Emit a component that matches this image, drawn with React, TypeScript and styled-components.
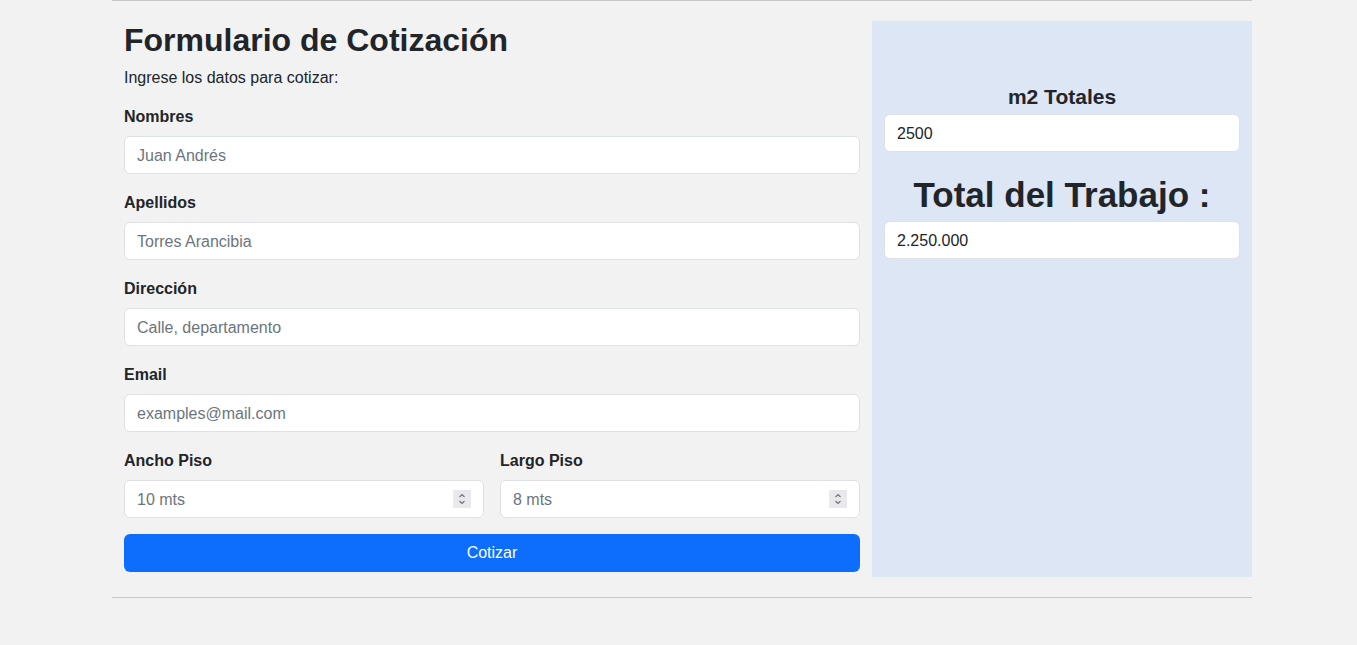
import React from "react";
import styled, { createGlobalStyle } from "styled-components";

const Global = createGlobalStyle`
  html, body { margin: 0; padding: 0; background: #f2f2f2; }
  body {
    font-family: "Liberation Sans", Arial, sans-serif;
    font-size: 16px;
    line-height: 1.5;
    color: #212529;
  }
  * { box-sizing: border-box; }
`;

const Container = styled.div`
  width: 1140px;
  margin: 0 0 0 112px;
`;

const Rule = styled.hr<{ $top?: number }>`
  margin: ${(p) => p.$top ?? 0}px 0 0;
  border: 0;
  border-top: 1px solid #c8c8c8;
  height: 0;
`;

const Row = styled.div`
  display: grid;
  grid-template-columns: 760px 380px;
  margin-top: 20px;
`;

const FormCol = styled.form`
  padding: 0 12px 5px;
`;

const Title = styled.h2`
  margin: 0 0 6px;
  font-size: 32px;
  line-height: 38px;
  font-weight: 700;
`;

const Intro = styled.p`
  margin: 0 0 15px;
  padding-top: 1px;
  line-height: 23px;
`;

const Group = styled.div`
  display: flex;
  flex-direction: column;
  margin-bottom: 16px;
`;

const Pair = styled.div`
  display: grid;
  grid-template-columns: 1fr 1fr;
  gap: 16px;
`;

const Label = styled.label`
  font-weight: 700;
  line-height: 24px;
  padding-top: 1px;
  margin-bottom: 7px;
`;

const FieldWrap = styled.div`
  position: relative;
`;

const Input = styled.input`
  display: block;
  width: 100%;
  height: 38px;
  padding: 7px 12px 5px;
  font: inherit;
  font-size: 16px;
  color: #212529;
  background: #fff;
  border: 1px solid #dee2e6;
  border-radius: 6px;
  outline: none;
  &::placeholder { color: #6c757d; }
`;

const Spinner = styled.span`
  position: absolute;
  right: 13px;
  top: 10px;
  width: 18px;
  height: 18px;
  background: #e9e9ed;
  display: flex;
  align-items: center;
  justify-content: center;
`;

const Button = styled.button`
  display: block;
  width: 100%;
  height: 38px;
  border: 0;
  border-radius: 6px;
  background: #0d6efd;
  color: #fff;
  font: inherit;
  font-size: 16px;
  padding-top: 1px;
`;

const Panel = styled.aside`
  background: #dde6f4;
  padding: 63px 12px 0;
  display: flex;
  flex-direction: column;
`;

const PanelLabel = styled.div<{ $size: number; $lh: number; $mt: number; $mb: number }>`
  text-align: center;
  font-weight: 700;
  font-size: ${(p) => p.$size}px;
  line-height: ${(p) => p.$lh}px;
  margin: ${(p) => p.$mt}px 0 ${(p) => p.$mb}px;
`;

const Spin = () => (
  <Spinner>
    <svg width="10" height="14" viewBox="0 0 10 14" fill="none" stroke="#707070" strokeWidth="1.1">
      <path d="M2.5 5 L5 2.5 L7.5 5" />
      <path d="M2.5 9 L5 11.5 L7.5 9" />
    </svg>
  </Spinner>
);

const fields = [
  { label: "Nombres", ph: "Juan Andrés" },
  { label: "Apellidos", ph: "Torres Arancibia" },
  { label: "Dirección", ph: "Calle, departamento" },
  { label: "Email", ph: "examples@mail.com" },
];

export default function App() {
  return (
    <>
      <Global />
      <Container>
        <Rule />
        <Row>
          <FormCol onSubmit={(e) => e.preventDefault()}>
            <Title>Formulario de Cotización</Title>
            <Intro>Ingrese los datos para cotizar:</Intro>
            {fields.map((f) => (
              <Group key={f.label}>
                <Label>{f.label}</Label>
                <Input placeholder={f.ph} />
              </Group>
            ))}
            <Pair>
              <Group>
                <Label>Ancho Piso</Label>
                <FieldWrap>
                  <Input placeholder="10 mts" />
                  <Spin />
                </FieldWrap>
              </Group>
              <Group>
                <Label>Largo Piso</Label>
                <FieldWrap>
                  <Input placeholder="8 mts" />
                  <Spin />
                </FieldWrap>
              </Group>
            </Pair>
            <Button type="submit">Cotizar</Button>
          </FormCol>
          <Panel>
            <PanelLabel $size={21} $lh={26} $mt={0} $mb={4}>m2 Totales</PanelLabel>
            <Input defaultValue="2500" readOnly />
            <PanelLabel $size={35} $lh={41} $mt={22} $mb={6}>Total del Trabajo :</PanelLabel>
            <Input defaultValue="2.250.000" readOnly />
          </Panel>
        </Row>
        <Rule $top={20} />
      </Container>
    </>
  );
}
